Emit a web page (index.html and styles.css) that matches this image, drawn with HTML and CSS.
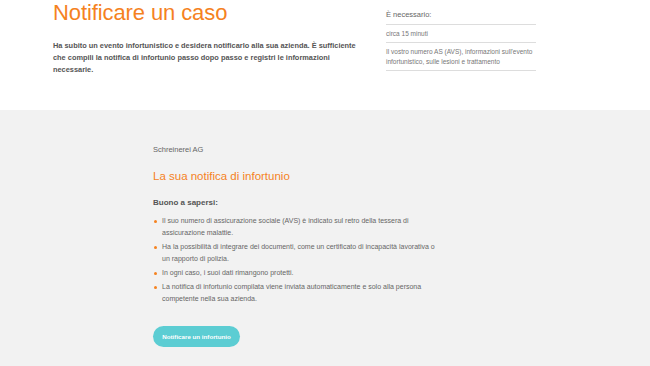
FILE: index.html
```html
<!DOCTYPE html>
<html lang="it">
<head>
  <meta charset="UTF-8">
  <meta name="viewport" content="width=device-width, initial-scale=1.0">
  <title>Notificare un caso</title>
  <link rel="stylesheet" href="styles.css">
</head>
<body>
  <section class="intro">
    <div class="intro-main">
      <h1>Notificare un caso</h1>
      <p class="lead">Ha subito un evento infortunistico e desidera notificarlo alla sua azienda. È sufficiente che compili la notifica di infortunio passo dopo passo e registri le informazioni necessarie.</p>
    </div>
    <aside class="needed">
      <div class="needed-title">È necessario:</div>
      <div class="needed-row">circa 15 minuti</div>
      <div class="needed-row">Il vostro numero AS (AVS), informazioni sull'evento infortunistico, sulle lesioni e trattamento</div>
    </aside>
  </section>

  <section class="report">
    <div class="report-inner">
      <div class="company">Schreinerei AG</div>
      <h2>La sua notifica di infortunio</h2>
      <h3>Buono a sapersi:</h3>
      <ul class="tips">
        <li>Il suo numero di assicurazione sociale (AVS) è indicato sul retro della tessera di assicurazione malattie.</li>
        <li>Ha la possibilità di integrare dei documenti, come un certificato di incapacità lavorativa o un rapporto di polizia.</li>
        <li>In ogni caso, i suoi dati rimangono protetti.</li>
        <li>La notifica di infortunio compilata viene inviata automaticamente e solo alla persona competente nella sua azienda.</li>
      </ul>
      <button class="report-btn">Notificare un infortunio</button>
    </div>
  </section>
</body>
</html>
```

FILE: styles.css
```css
body {
  margin: 0;
  font-family: "Liberation Sans", Arial, sans-serif;
  color: #666;
  background: #f2f2f2;
}
.intro {
  background: #fff;
  height: 110px;
  display: flex;
  padding: 0 114px 0 53px;
  gap: 23px;
}
.intro-main {
  width: 310px;
}
h1 {
  margin: 0;
  font-size: 22px;
  line-height: 1.2;
  font-weight: normal;
  color: #f5821f;
  letter-spacing: -0.1px;
}
.lead {
  margin: 14px 0 0;
  font-size: 7.4px;
  line-height: 11.7px;
  font-weight: bold;
  color: #555;
}
.needed {
  flex: 1;
  padding-top: 9px;
}
.needed-title {
  font-size: 7.5px;
  line-height: 12px;
  padding-bottom: 3px;
  border-bottom: 1px solid #ddd;
}
.needed-row {
  font-size: 6.5px;
  line-height: 10px;
  padding: 4px 0 3px;
  color: #777;
  border-bottom: 1px solid #ddd;
}
.report-inner {
  width: 288px;
  margin-left: 153px;
  padding-top: 34px;
}
.company {
  font-size: 7.5px;
  line-height: 12px;
}
h2 {
  margin: 12px 0 0;
  font-size: 11.5px;
  line-height: 16px;
  font-weight: normal;
  color: #f5821f;
}
h3 {
  margin: 13px 0 0;
  font-size: 8px;
  line-height: 12px;
  color: #555;
}
.tips {
  margin: 6px 0 0;
  padding: 0;
  list-style: none;
}
.tips li {
  position: relative;
  padding-left: 9px;
  font-size: 7px;
  line-height: 12.3px;
  margin-bottom: 1.5px;
}
.tips li::before {
  content: "";
  position: absolute;
  left: 1px;
  top: 5px;
  width: 3px;
  height: 3px;
  border-radius: 50%;
  background: #f5821f;
}
.report-btn {
  margin-top: 19px;
  height: 21px;
  width: 87px;
  border: none;
  border-radius: 11px;
  background: #5ccdd3;
  color: #fff;
  font-family: inherit;
  font-size: 6.2px;
  font-weight: bold;
  padding: 0;
}
```
